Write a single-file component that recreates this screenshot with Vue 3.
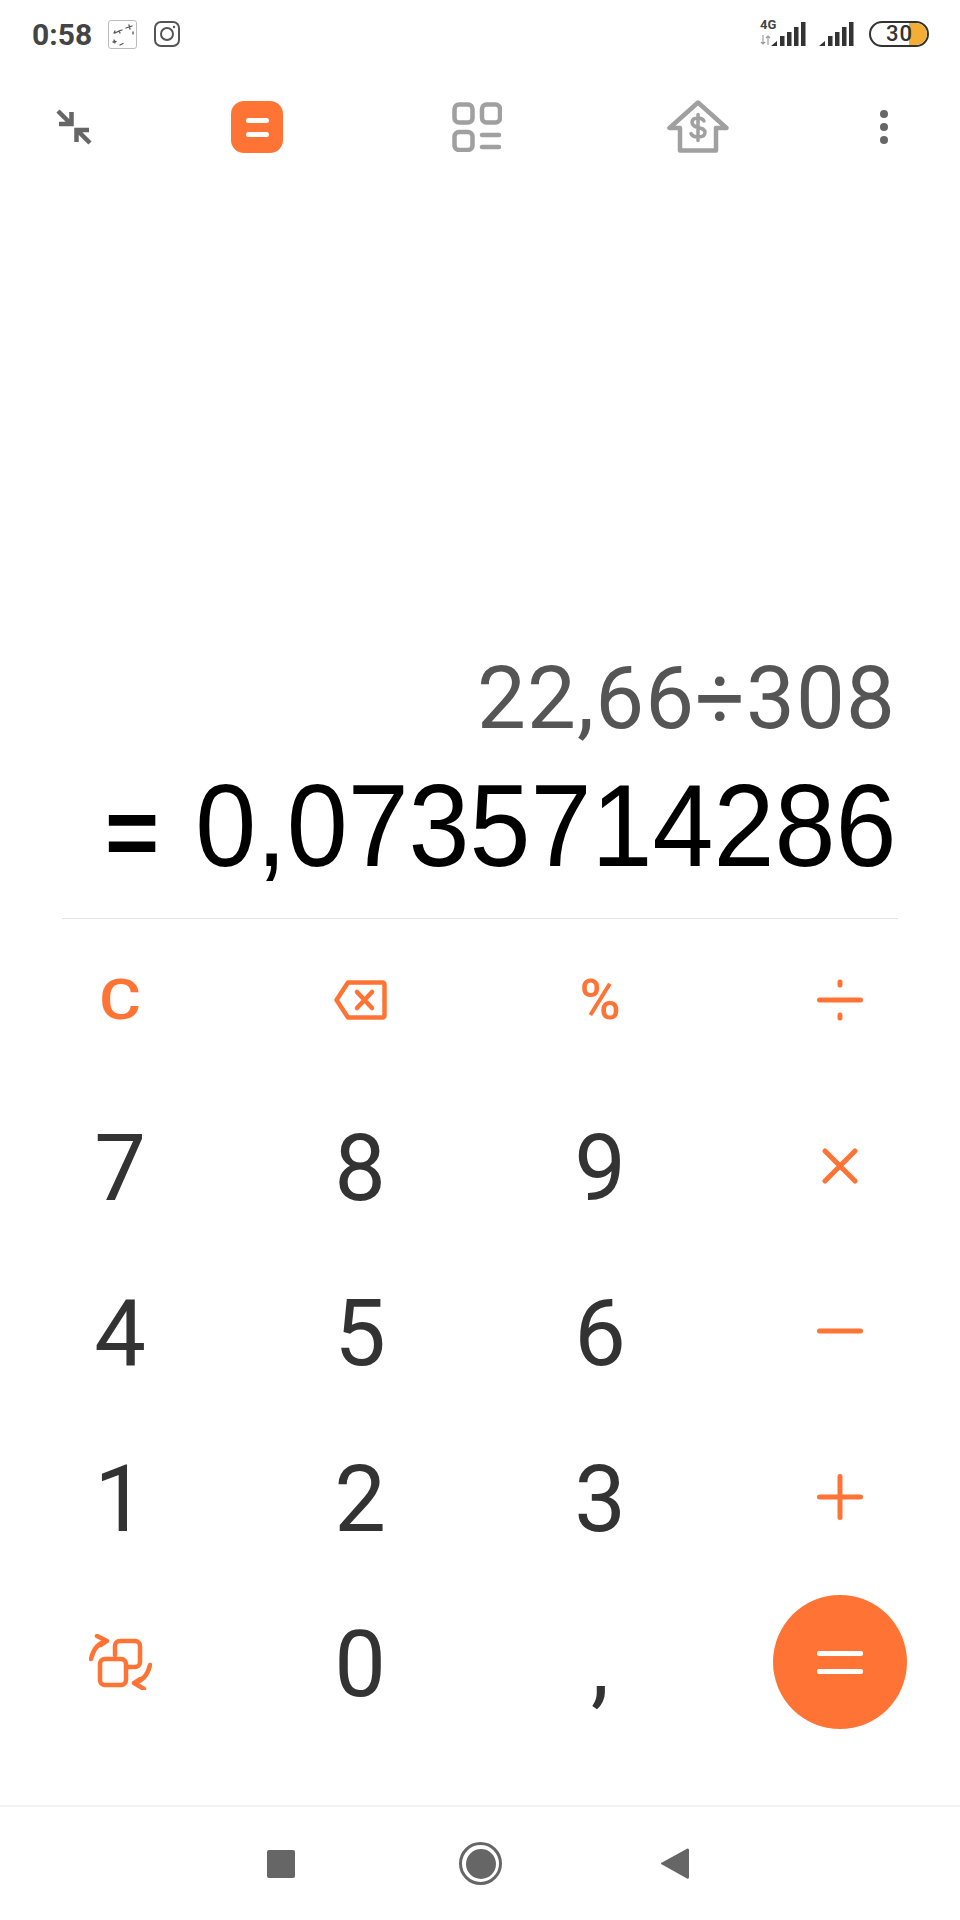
<script setup>
const rows = [
  ['7', '8', '9', 'times'],
  ['4', '5', '6', 'minus'],
  ['1', '2', '3', 'plus'],
  ['swap', '0', ',', 'equals']
]
const isDigit = k => k.length === 1
</script>

<template>
  <div class="phone">
    <header class="status">
      <span class="time">0:58</span>
      <svg class="notif" width="29" height="29" viewBox="0 0 29 29">
        <rect x="0.5" y="0.5" width="28" height="28" rx="2.5" fill="#fff" stroke="#bbb" />
        <path d="M7 13l4-2 3-1M11 11l1 2M18 8l6-2M21 5l1 4M6 20l1 3M5 22l3-.5M12 25l3-1.500M7 11l-1 2M25 12v2" fill="none" stroke="#555" stroke-width="1.300" stroke-linecap="round" />
      </svg>
      <svg class="insta" width="26" height="26" viewBox="0 0 26 26" fill="none" stroke="#555" stroke-width="2">
        <rect x="1" y="1" width="24" height="24" rx="6" />
        <circle cx="13" cy="13" r="6" />
        <circle cx="20" cy="6" r="1.200" fill="#555" stroke="none" />
      </svg>
      <span class="spacer"></span>
      <span class="net">
        <span class="g4">4G</span>
        <svg width="11" height="10" viewBox="0 0 11 10" class="arrows" fill="none" stroke="#999" stroke-width="1.100">
          <path d="M3 0v9M1 7l2 2 2-2M8 10V1M6 3l2-2 2 2" />
        </svg>
      </span>
      <svg class="signal" width="35" height="26" viewBox="0 0 35 26" fill="#333">
        <path d="M0 25l6-5v5zM9 15h4.500v10H9zM16 11h4.500v14H16zM23 6h4.500v19H23zM30 1h4.500v24H30z" />
      </svg>
      <svg class="signal second" width="35" height="26" viewBox="0 0 35 26" fill="#333">
        <path d="M0 25l6-5v5zM9 15h4.500v10H9zM16 11h4.500v14H16zM23 6h4.500v19H23zM30 1h4.500v24H30z" />
      </svg>
      <span class="battery"><b>30</b><i></i></span>
    </header>

    <nav class="toolbar">
      <svg class="t-collapse" width="36" height="36" viewBox="0 0 36 36" fill="none" stroke="#666" stroke-width="4.500">
        <path d="M2 2l13 13M3 15h12.500V3" />
        <path d="M34 34L21 21M33 21H20.500V33" />
      </svg>
      <span class="t-calc"><i></i><i></i></span>
      <svg class="t-grid" width="50" height="50" viewBox="0 0 50 50" fill="none" stroke="#a0a0a0" stroke-width="4.500" stroke-linecap="round">
        <rect x="2.500" y="2.500" width="18" height="18" rx="4.500" />
        <rect x="30" y="2.500" width="18" height="18" rx="4.500" />
        <rect x="2.500" y="30" width="18" height="18" rx="4.500" />
        <path d="M30 33h17M30 45h17" />
      </svg>
      <svg class="t-home" width="62" height="53" viewBox="0 0 62 53" fill="none" stroke="#a0a0a0" stroke-width="4.500" stroke-linejoin="round" stroke-linecap="round">
        <path d="M31 2.500L2.500 28h10.500v22.500h36V28H59.500z" />
        <path d="M37 21c-1-2-3-3-6-3-4 0-6 2-6 4.500 0 6.500 13 3.500 13 10 0 3-3 4.500-7 4.500-3 0-6-1-7-3.500M31 14.500v26" stroke-width="3.500" />
      </svg>
      <span class="t-more"><i></i><i></i><i></i></span>
    </nav>

    <section class="display">
      <div class="expr">22,66÷308</div>
      <div class="result"><span class="eq">=</span> 0,0735714286</div>
    </section>
    <div class="rule"></div>

    <section class="keys">
      <button class="key op op-c">C</button>
      <button class="key">
        <svg width="53" height="40" viewBox="0 0 53 40" fill="none" stroke="#ff7435" stroke-width="4.500" stroke-linejoin="round" stroke-linecap="round">
          <path d="M14 2.500h34.500a2 2 0 0 1 2 2v31a2 2 0 0 1-2 2H14L2.500 20z" />
          <path d="M23 12l15 16M38 12L23 28" />
        </svg>
      </button>
      <button class="key op op-pct">%</button>
      <button class="key">
        <svg width="46" height="42" viewBox="0 0 46 42" fill="none" stroke="#ff7435" stroke-width="5" stroke-linecap="round">
          <path d="M2.500 21h41M23 3v3M23 36v3" />
        </svg>
      </button>

      <template v-for="row in rows" :key="row[0]">
        <button v-for="k in row" :key="k" class="key" :class="{ digit: isDigit(k) }">
          <template v-if="isDigit(k)">{{ k }}</template>
          <svg v-else-if="k === 'times'" width="36" height="36" viewBox="0 0 36 36" fill="none" stroke="#ff7435" stroke-width="5" stroke-linecap="round">
            <path d="M3 3l30 30M33 3L3 33" />
          </svg>
          <svg v-else-if="k === 'minus'" width="46" height="6" viewBox="0 0 46 6" fill="none" stroke="#ff7435" stroke-width="5" stroke-linecap="round">
            <path d="M2.500 3h41" />
          </svg>
          <svg v-else-if="k === 'plus'" width="46" height="46" viewBox="0 0 46 46" fill="none" stroke="#ff7435" stroke-width="5" stroke-linecap="round">
            <path d="M2.500 23h41M23 2.500v41" />
          </svg>
          <svg v-else-if="k === 'swap'" width="63" height="56" viewBox="0 0 63 56" fill="none" stroke="#ff7435" stroke-width="4.500" stroke-linecap="round" stroke-linejoin="round">
            <path d="M26 21V12a5 5 0 0 1 5-5h15a5 5 0 0 1 5 5v16a5 5 0 0 1-5 5h-9" />
            <rect x="11" y="25" width="26" height="26" rx="5" />
            <path d="M2 25C4 16 9 9 18 7M8 2l10 5-6 4" />
            <path d="M61 31c-2 9-7 16-16 18M55 55l-10-6 6-4" />
          </svg>
          <span v-else class="equals"><i></i><i></i></span>
        </button>
      </template>
    </section>

    <footer class="nav">
      <span class="n-square"></span>
      <span class="n-home"><i></i></span>
      <svg class="n-back" width="28" height="31" viewBox="0 0 28 31">
        <path d="M26 .800L1 14.500a1 1 0 0 0 0 2L26 30.500a1.300 1.300 0 0 0 2-1V2a1.300 1.300 0 0 0-2-1.200z" fill="#666" />
      </svg>
    </footer>
  </div>
</template>

<style>
html, body { margin: 0; background: #fff; }
</style>

<style scoped>
.phone {
  width: 960px;
  height: 1920px;
  display: flex;
  flex-direction: column;
  background: #fff;
  font-family: Roboto, "Liberation Sans", sans-serif;
  overflow: hidden;
}
.status {
  height: 68px;
  box-sizing: border-box;
  padding: 0 31px 0 32px;
  display: flex;
  align-items: center;
}
.time { font-size: 30px; font-weight: 700; color: #444; width: 76px; }
.insta { margin-left: 17px; }
.spacer { flex: 1; }
.net { width: 11px; height: 26px; position: relative; }
.g4 {
  position: absolute;
  left: 0;
  top: -2px;
  font-size: 13px;
  font-weight: 700;
  color: #444;
  line-height: 12px;
}
.arrows { position: absolute; left: 0; top: 14px; }
.second { margin-left: 13px; }
.battery {
  margin-left: 15px;
  width: 60px;
  height: 26px;
  box-sizing: border-box;
  border: 2.500px solid #333;
  border-radius: 13px;
  position: relative;
  display: block;
  overflow: hidden;
}
.battery b {
  position: absolute;
  left: 15px;
  top: 0;
  font-size: 22px;
  line-height: 21px;
  font-weight: 500;
  letter-spacing: 1px;
  color: #333;
  z-index: 1;
}
.battery i {
  position: absolute;
  right: 0;
  top: 0;
  bottom: 0;
  width: 18px;
  background: #f5ae35;
  border-radius: 0 11px 11px 0;
}

.toolbar {
  height: 100px;
  display: flex;
  align-items: center;
  padding-left: 56px;
}
.t-collapse { margin-top: 18px; flex: none; }
.t-calc {
  margin-left: 139px;
  width: 52px;
  height: 52px;
  border-radius: 13px;
  background: #ff7435;
  display: flex;
  flex-direction: column;
  align-items: center;
  justify-content: center;
  gap: 9px;
  margin-top: 18px;
}
.t-calc i { width: 23px; height: 5px; border-radius: 3px; background: #fff; }
.t-grid { margin-left: 169px; margin-top: 18px; }
.t-home { margin-left: 165px; margin-top: 17px; }
.t-more {
  margin-left: 151px;
  width: 8px;
  display: flex;
  flex-direction: column;
  gap: 5px;
  margin-top: 18px;
}
.t-more i { width: 8px; height: 8px; border-radius: 50%; background: #666; }

.display {
  flex: 1;
  display: flex;
  flex-direction: column;
  justify-content: flex-end;
  align-items: flex-end;
  padding: 0 64px 27px 0;
}
.expr {
  font-size: 87px;
  line-height: 100px;
  letter-spacing: 1.100px;
  color: #555;
  font-weight: 400;
  margin-bottom: 19px;
}
.result {
  font-family: "Liberation Sans", Arial, sans-serif;
  font-size: 116px;
  line-height: 118px;
  color: #000;
  white-space: nowrap;
  transform: scaleX(0.945);
  transform-origin: right center;
}
.eq { font-size: 98px; font-weight: 700; margin-right: 6px; }
.rule { height: 1px; margin: 0 62px; background: #e4e4e4; }

.keys {
  display: grid;
  grid-template-columns: repeat(4, 240px);
  grid-auto-rows: 165.500px;
  margin-top: -1px;
  margin-bottom: 60px;
}
.key {
  appearance: none;
  border: 0;
  background: none;
  padding: 0;
  display: flex;
  align-items: center;
  justify-content: center;
  font-family: inherit;
  color: #333;
}
.digit { font-size: 92px; font-weight: 400; padding-top: 5px; }
.op { color: #ff7435; }
.op-c { font-size: 56px; font-weight: 500; transform: scaleX(1.15); }
.op-pct { font-size: 56px; font-weight: 500; }
.equals {
  width: 134px;
  height: 134px;
  border-radius: 50%;
  background: #ff7435;
  display: flex;
  flex-direction: column;
  align-items: center;
  justify-content: center;
  gap: 13px;
}
.equals i { width: 46px; height: 5px; border-radius: 2px; background: #fff; }

.nav {
  height: 115px;
  border-top: 2px solid #f2f2f2;
  display: flex;
  align-items: center;
  padding-left: 267px;
  box-sizing: border-box;
}
.n-square { width: 28px; height: 28px; border-radius: 2px; background: #666; }
.n-home {
  margin-left: 164px;
  width: 43px;
  height: 43px;
  box-sizing: border-box;
  border: 3px solid #666;
  border-radius: 50%;
  display: flex;
  align-items: center;
  justify-content: center;
}
.n-home i { width: 30px; height: 30px; border-radius: 50%; background: #666; }
.n-back { margin-left: 159px; }
</style>
